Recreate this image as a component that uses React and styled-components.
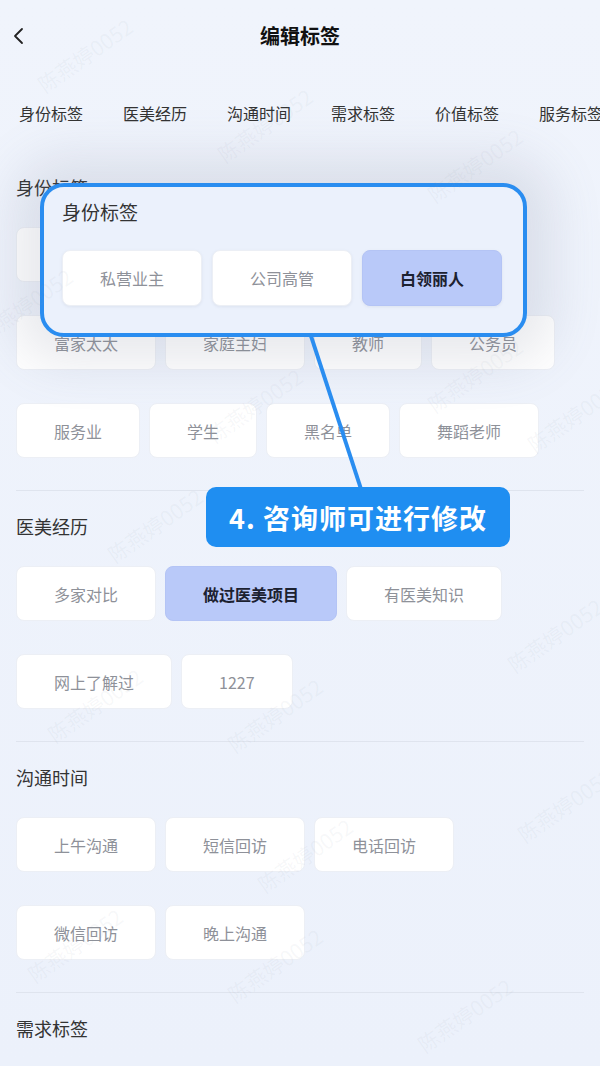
import React from "react"
import styled, { createGlobalStyle } from "styled-components"

const GlobalStyle = createGlobalStyle`
  html, body {
    margin: 0;
    padding: 0;
    background: #edf2fb;
  }
  body {
    font-family: "Noto Sans CJK SC", "Noto Sans", sans-serif;
    overflow: hidden;
  }
  * {
    box-sizing: border-box;
  }
`

const Page = styled.div`
  position: relative;
  width: 600px;
  height: 1066px;
  overflow: hidden;
  background: linear-gradient(180deg, #f0f4fc 0%, #ecf1fb 100%);
`

const Header = styled.header`
  position: relative;
  height: 72px;
  display: flex;
  align-items: center;
  justify-content: center;
`

const BackBtn = styled.button`
  position: absolute;
  left: 6px;
  top: 24px;
  width: 24px;
  height: 24px;
  padding: 0;
  border: none;
  background: transparent;
  display: flex;
  align-items: center;
  justify-content: center;
`

const Title = styled.h1`
  margin: 0;
  font-size: 20px;
  font-weight: 700;
  color: #111;
  line-height: 1;
`

const Tabs = styled.nav`
  margin-top: 21px;
  height: 40px;
  display: flex;
  align-items: center;
  gap: 40px;
  padding-left: 19px;
  white-space: nowrap;
  overflow: hidden;
`

const Tab = styled.span`
  font-size: 16px;
  color: #333;
  flex-shrink: 0;
`

const Section = styled.section`
  margin: 0 16px;
  padding: ${(p) => (p.$first ? "40px 0 32px" : "21px 0 32px")};
  border-top: ${(p) => (p.$first ? "none" : "1px solid #dfe4ee")};
`

const Heading = styled.h2`
  margin: 0 0 26px;
  font-size: 18px;
  font-weight: 400;
  line-height: 28px;
  color: #333;
`

const TagWrap = styled.div`
  display: flex;
  flex-wrap: wrap;
  column-gap: 9px;
  row-gap: 33px;
`

const Tag = styled.div`
  height: ${(p) => (p.$tall ? "56px" : "55px")};
  padding: 0 37px;
  border-radius: 8px;
  display: flex;
  align-items: center;
  justify-content: center;
  flex-shrink: 0;
  font-size: 16px;
  font-weight: ${(p) => (p.$active ? 700 : 400)};
  color: ${(p) => (p.$active ? "#1c2130" : "#8e9199")};
  background: ${(p) => (p.$active ? "#b9c9f9" : "#ffffff")};
  border: 1px solid ${(p) => (p.$active ? "#b4c4f5" : "#eceff5")};
`

const Popup = styled.div`
  position: absolute;
  left: 40px;
  top: 183px;
  width: 487px;
  height: 154px;
  border: 4px solid #2a8df0;
  border-radius: 24px;
  background: #ebf1fc;
  padding: 11px 18px 0;
  box-shadow: 0 0 50px 26px rgba(110, 120, 140, 0.16);
  z-index: 3;
`

const PopupTitle = styled.div`
  font-size: 19px;
  line-height: 28px;
  color: #333;
  margin-bottom: 24px;
`

const PopupTags = styled.div`
  display: flex;
  gap: 10px;
`

const PopupTag = styled(Tag)`
  width: 140px;
  padding: 0;
  box-shadow: 0 1px 3px rgba(120, 130, 160, 0.12);
`

const Connector = styled.svg`
  position: absolute;
  left: 0;
  top: 0;
  z-index: 4;
  pointer-events: none;
`

const Callout = styled.div`
  position: absolute;
  left: 206px;
  top: 487px;
  width: 304px;
  height: 60px;
  border-radius: 10px;
  background: #1f8ef1;
  color: #fff;
  font-size: 27px;
  font-weight: 700;
  letter-spacing: 1px;
  display: flex;
  align-items: center;
  justify-content: center;
  z-index: 5;
`

const Watermarks = styled.div`
  position: absolute;
  inset: 0;
  pointer-events: none;
  z-index: 6;
`

const Mark = styled.span`
  position: absolute;
  font-size: 21px;
  color: rgba(140, 150, 170, 0.07);
  transform: rotate(-35deg);
  white-space: nowrap;
`

const marks = [
  [30, 40], [210, 110], [420, 150], [-30, 290], [200, 390], [420, 360],
  [520, 400], [100, 510], [500, 620], [40, 690], [220, 700], [510, 790],
  [250, 840], [20, 930], [220, 950], [410, 1000],
]

const sections = [
  {
    title: "身份标签",
    tags: [
      { t: "私营业主" }, { t: "公司高管" }, { t: "白领丽人", a: true },
      { t: "富家太太" }, { t: "家庭主妇" }, { t: "教师" }, { t: "公务员" },
      { t: "服务业" }, { t: "学生" }, { t: "黑名单" }, { t: "舞蹈老师" },
    ],
  },
  {
    title: "医美经历",
    tags: [
      { t: "多家对比" }, { t: "做过医美项目", a: true }, { t: "有医美知识" },
      { t: "网上了解过" }, { t: "1227" },
    ],
  },
  {
    title: "沟通时间",
    tags: [
      { t: "上午沟通" }, { t: "短信回访" }, { t: "电话回访" },
      { t: "微信回访" }, { t: "晚上沟通" },
    ],
  },
  { title: "需求标签", tags: [] },
]

const tabs = ["身份标签", "医美经历", "沟通时间", "需求标签", "价值标签", "服务标签"]

export default function App() {
  return (
    <Page>
      <GlobalStyle />
      <Header>
        <BackBtn aria-label="返回">
          <svg width="14" height="18" viewBox="0 0 14 18">
            <polyline points="11,2 4,9 11,16" fill="none" stroke="#222" strokeWidth="1.8" strokeLinecap="round" strokeLinejoin="round" />
          </svg>
        </BackBtn>
        <Title>编辑标签</Title>
      </Header>
      <Tabs>
        {tabs.map((t) => (
          <Tab key={t}>{t}</Tab>
        ))}
      </Tabs>
      {sections.map((s, i) => (
        <Section key={s.title} $first={i === 0}>
          <Heading>{s.title}</Heading>
          <TagWrap>
            {s.tags.map((tag) => (
              <Tag key={tag.t} $active={tag.a}>
                {tag.t}
              </Tag>
            ))}
          </TagWrap>
        </Section>
      ))}

      <Popup>
        <PopupTitle>身份标签</PopupTitle>
        <PopupTags>
          <PopupTag $tall>私营业主</PopupTag>
          <PopupTag $tall>公司高管</PopupTag>
          <PopupTag $tall $active>白领丽人</PopupTag>
        </PopupTags>
      </Popup>
      <Connector width="600" height="1066">
        <line x1="311" y1="336" x2="361" y2="489" stroke="#2a8df0" strokeWidth="4" />
      </Connector>
      <Callout>4. 咨询师可进行修改</Callout>

      <Watermarks>
        {marks.map(([x, y], i) => (
          <Mark key={i} style={{ left: x, top: y }}>
            陈燕婷0052
          </Mark>
        ))}
      </Watermarks>
    </Page>
  )
}
